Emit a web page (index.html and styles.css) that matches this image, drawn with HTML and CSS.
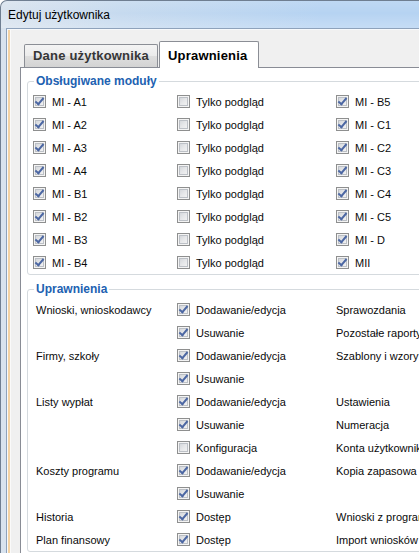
FILE: index.html
```html
<!DOCTYPE html>
<html lang="pl">
<head>
<meta charset="utf-8">
<title>Edytuj użytkownika</title>
<link rel="stylesheet" href="styles.css">
</head>
<body>
<div class="window">
  <div class="titlebar">Edytuj użytkownika</div>
  <div class="frame">
    <div class="client">
      <div class="tabs">
        <div class="tab">Dane użytkownika</div>
        <div class="tab active">Uprawnienia</div>
      </div>
      <div class="panel">
        <div class="group">
          <div class="gtitle">Obsługiwane moduły</div>
          <div class="grid">
            <div class="opt"><span class="cb on"></span>MI - A1</div>
            <div class="opt"><span class="cb"></span>Tylko podgląd</div>
            <div class="opt"><span class="cb on"></span>MI - B5</div>

            <div class="opt"><span class="cb on"></span>MI - A2</div>
            <div class="opt"><span class="cb"></span>Tylko podgląd</div>
            <div class="opt"><span class="cb on"></span>MI - C1</div>

            <div class="opt"><span class="cb on"></span>MI - A3</div>
            <div class="opt"><span class="cb"></span>Tylko podgląd</div>
            <div class="opt"><span class="cb on"></span>MI - C2</div>

            <div class="opt"><span class="cb on"></span>MI - A4</div>
            <div class="opt"><span class="cb"></span>Tylko podgląd</div>
            <div class="opt"><span class="cb on"></span>MI - C3</div>

            <div class="opt"><span class="cb on"></span>MI - B1</div>
            <div class="opt"><span class="cb"></span>Tylko podgląd</div>
            <div class="opt"><span class="cb on"></span>MI - C4</div>

            <div class="opt"><span class="cb on"></span>MI - B2</div>
            <div class="opt"><span class="cb"></span>Tylko podgląd</div>
            <div class="opt"><span class="cb on"></span>MI - C5</div>

            <div class="opt"><span class="cb on"></span>MI - B3</div>
            <div class="opt"><span class="cb"></span>Tylko podgląd</div>
            <div class="opt"><span class="cb on"></span>MI - D</div>

            <div class="opt"><span class="cb on"></span>MI - B4</div>
            <div class="opt"><span class="cb"></span>Tylko podgląd</div>
            <div class="opt"><span class="cb on"></span>MII</div>
          </div>
        </div>

        <div class="group">
          <div class="gtitle">Uprawnienia</div>
          <div class="grid">
            <div class="lbl">Wnioski, wnioskodawcy</div>
            <div class="opt"><span class="cb on"></span>Dodawanie/edycja</div>
            <div class="lbl3">Sprawozdania</div>

            <div class="lbl"></div>
            <div class="opt"><span class="cb on"></span>Usuwanie</div>
            <div class="lbl3">Pozostałe raporty</div>

            <div class="lbl">Firmy, szkoły</div>
            <div class="opt"><span class="cb on"></span>Dodawanie/edycja</div>
            <div class="lbl3">Szablony i wzory dokumentów</div>

            <div class="lbl"></div>
            <div class="opt"><span class="cb on"></span>Usuwanie</div>
            <div class="lbl3"></div>

            <div class="lbl">Listy wypłat</div>
            <div class="opt"><span class="cb on"></span>Dodawanie/edycja</div>
            <div class="lbl3">Ustawienia</div>

            <div class="lbl"></div>
            <div class="opt"><span class="cb on"></span>Usuwanie</div>
            <div class="lbl3">Numeracja</div>

            <div class="lbl"></div>
            <div class="opt"><span class="cb"></span>Konfiguracja</div>
            <div class="lbl3">Konta użytkowników</div>

            <div class="lbl">Koszty programu</div>
            <div class="opt"><span class="cb on"></span>Dodawanie/edycja</div>
            <div class="lbl3">Kopia zapasowa</div>

            <div class="lbl"></div>
            <div class="opt"><span class="cb on"></span>Usuwanie</div>
            <div class="lbl3"></div>

            <div class="lbl">Historia</div>
            <div class="opt"><span class="cb on"></span>Dostęp</div>
            <div class="lbl3">Wnioski z programu</div>

            <div class="lbl">Plan finansowy</div>
            <div class="opt"><span class="cb on"></span>Dostęp</div>
            <div class="lbl3">Import wniosków i wnioskodawców</div>
          </div>
        </div>
      </div>
    </div>
  </div>
</div>
</body>
</html>
```

FILE: styles.css
```css
html, body {
  margin: 0;
  height: 100%;
  overflow: hidden;
}

body {
  font-family: "Liberation Sans", Arial, sans-serif;
  font-size: 11px;
  color: #0a0a0a;
  background: #ffffff;
}

.window {
  width: 560px;
  height: 620px;
  box-sizing: border-box;
  border-left: 1px solid #6f7e91;
  border-top: 1px solid #6f7e91;
  border-top-left-radius: 7px;
  background: linear-gradient(to right, #d9e3ee 0, #c6daef 120px, #b6d3f2 320px);
  display: flex;
  flex-direction: column;
}

.titlebar {
  height: 27px;
  box-sizing: border-box;
  padding: 1px 0 0 7px;
  line-height: 26px;
  font-size: 12px;
  color: #000;
  white-space: nowrap;
  background: linear-gradient(to bottom, rgba(255,255,255,0.12), rgba(255,255,255,0) 45%, rgba(255,255,255,0.22));
  border-top-left-radius: 6px;
}

.frame {
  flex: 1;
  display: flex;
  padding-left: 5px;
}

.client {
  flex: 1;
  border-left: 1px solid #8ea2bb;
  border-top: 1px solid #8ea2bb;
  background: #f0f0f0;
  box-shadow: inset 1px 1px 0 #f7f9fb, inset 3px 0 0 #f3d3a5, inset 4px 0 0 #fafafa;
  padding: 12px 0 0 13px;
  display: flex;
  flex-direction: column;
}

.tabs {
  display: flex;
  align-items: flex-end;
  height: 26px;
  position: relative;
  z-index: 1;
}

.tab {
  box-sizing: border-box;
  width: 134px;
  height: 23px;
  margin-left: 4px;
  padding: 0 0 0 8px;
  line-height: 22px;
  border: 1px solid #8b8e95;
  border-bottom: 0;
  border-radius: 2px 2px 0 0;
  font-size: 13px;
  font-weight: bold;
  letter-spacing: 0.2px;
  color: #363636;
  white-space: nowrap;
  background: linear-gradient(to bottom, #f4f4f4 0, #ebebeb 50%, #dedede 51%, #d3d3d3 100%);
}

.tab.active {
  width: 100px;
  height: 27px;
  margin-left: 1px;
  margin-bottom: -1px;
  padding-top: 3px;
  background: #ffffff;
  color: #000;
}

.panel {
  flex: 1;
  border-left: 1px solid #898c95;
  border-top: 1px solid #898c95;
  background: #ffffff;
  padding: 13px 0 0 6px;
}

.group {
  border: 1px solid #d5dade;
  border-radius: 3px;
}

.group + .group {
  margin-top: 14px;
}

.gtitle {
  width: max-content;
  margin: -8px 0 0 6px;
  padding: 0 2px;
  background: #ffffff;
  color: #2161b1;
  font-size: 12px;
  font-weight: bold;
  line-height: 14px;
}

.grid {
  display: grid;
  grid-template-columns: 144px 159px max-content;
  grid-auto-rows: 23px;
  margin-top: 2px;
  padding-left: 5px;
}

.opt, .lbl, .lbl3 {
  display: flex;
  align-items: center;
  white-space: nowrap;
}

.opt {
  gap: 6px;
}

.lbl {
  padding-left: 3px;
}

.cb {
  flex: none;
  position: relative;
  width: 13px;
  height: 13px;
  box-sizing: border-box;
  border: 1px solid #8e8f8f;
  background: linear-gradient(135deg, #cbcfd4 0, #e6e7e9 50%, #f7f7f7 100%);
  box-shadow: inset 0 0 0 1px #f4f4f4, inset 0 0 0 2px #bcc0c6;
}

.cb.on::after {
  content: "";
  position: absolute;
  left: 3px;
  top: 0;
  width: 3px;
  height: 7px;
  border: solid #4c67a3;
  border-width: 0 2px 2px 0;
  transform: rotate(40deg);
}
```
